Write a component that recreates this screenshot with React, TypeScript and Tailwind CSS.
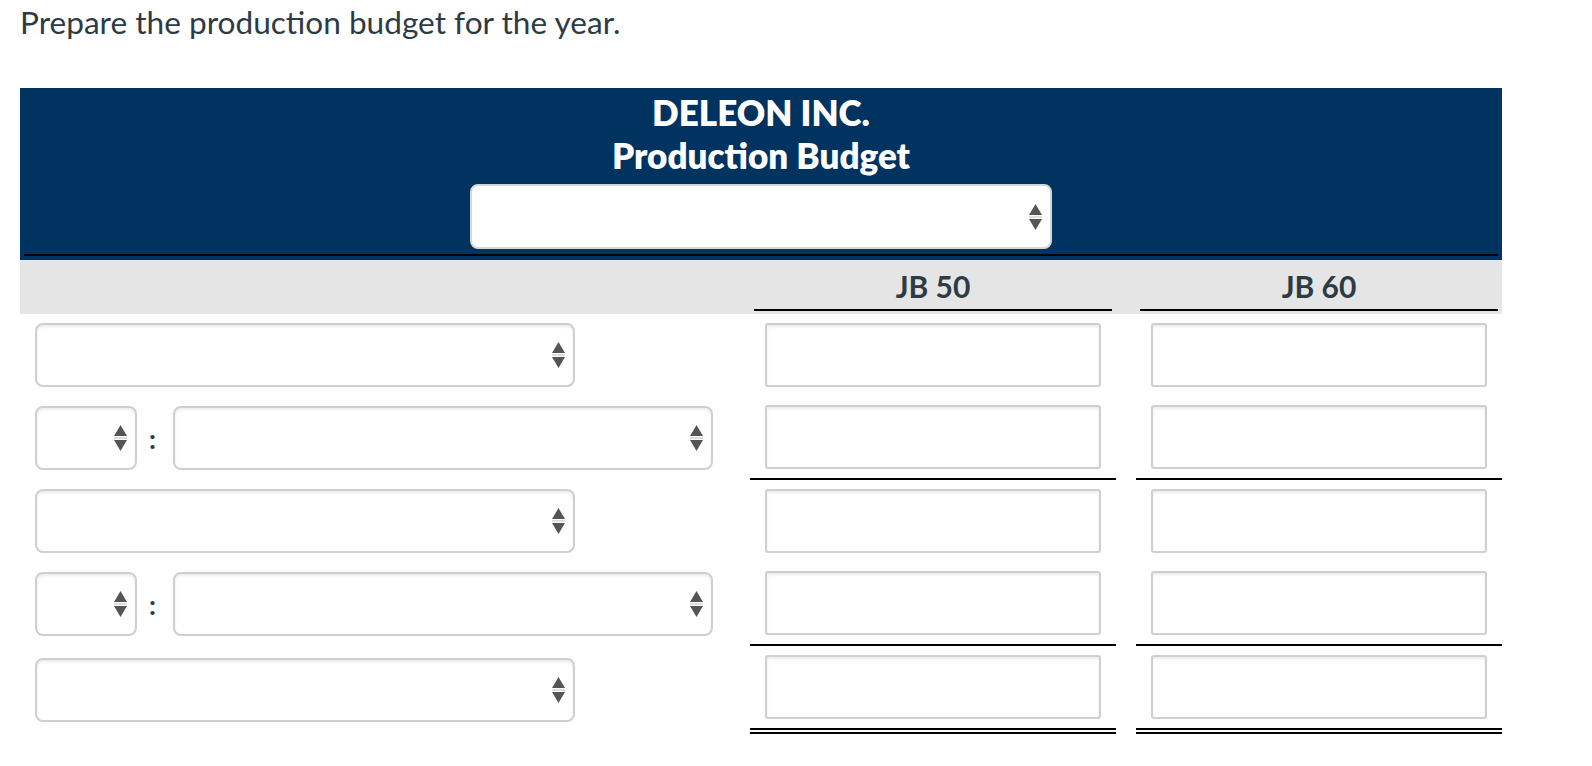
import React from 'react'

// Production budget worksheet: header band, column titles, five entry rows.

const text = 'text-[#2d3b45]'

function Arrows() {
  return (
    <svg width="13" height="26" viewBox="0 0 13 26" aria-hidden="true">
      <polygon points="0,11 6.5,0 13,11" fill="#555" />
      <line x1="0" y1="13" x2="13" y2="13" stroke="#bdbdbd" strokeWidth="1" />
      <polygon points="0,15 13,15 6.5,26" fill="#555" />
    </svg>
  )
}

function Select({ width }: { width: string }) {
  return (
    <div
      role="combobox"
      className={`${width} h-[64px] flex items-center justify-end pr-[8px] bg-white border-2 border-[#cfcfcf] rounded-[8px] shadow-[inset_0_2px_3px_rgba(0,0,0,0.08)]`}
    >
      <Arrows />
    </div>
  )
}

function Input() {
  return (
    <div className="h-[64px] bg-white border-2 border-[#cfcfcf] rounded-[3px] shadow-[inset_0_2px_3px_rgba(0,0,0,0.08)]" />
  )
}

type Rule = 'none' | 'single' | 'double'

const ruleClass: Record<Rule, string> = {
  none: '',
  single: 'border-b-2 border-black',
  double: 'border-b-[6px] border-double border-black',
}

function Row({ split, rule }: { split: boolean; rule: Rule }) {
  return (
    <div className="flex">
      <div className="w-[730px] pl-[15px] py-[9px] flex items-center">
        {split ? (
          <>
            <Select width="w-[102px]" />
            <span className={`w-[36px] pl-[12px] text-[27px] font-bold leading-none ${text}`}>:</span>
            <Select width="w-[540px]" />
          </>
        ) : (
          <Select width="w-[540px]" />
        )}
      </div>
      <div className={`w-[366px] px-[15px] py-[9px] ${ruleClass[rule]}`}>
        <Input />
      </div>
      <div className="w-[20px]" />
      <div className={`w-[366px] px-[15px] py-[9px] ${ruleClass[rule]}`}>
        <Input />
      </div>
    </div>
  )
}

export default function App() {
  const rows: { split: boolean; rule: Rule }[] = [
    { split: false, rule: 'none' },
    { split: true, rule: 'single' },
    { split: false, rule: 'none' },
    { split: true, rule: 'single' },
    { split: false, rule: 'double' },
  ]

  return (
    <div className="min-h-screen bg-white pt-[3px] px-[20px] font-['Lato','Noto_Sans',sans-serif]">
      <p className={`text-[31.6px] leading-[38px] ${text}`}>Prepare the production budget for the year.</p>

      <div className="mt-[47px] w-[1482px]">
        <div className="bg-[#00335f] pt-[3px] px-[4px] pb-[4px]">
          <div className="border-b-2 border-black pb-[5px] flex flex-col items-center text-white font-extrabold text-[35px] leading-[43px]">
            <div>DELEON INC.</div>
            <div>Production Budget</div>
            <div
              role="combobox"
              className="mt-[7px] w-[582px] h-[65px] flex items-center justify-end pr-[8px] bg-white border-2 border-[#d6d6d6] rounded-[8px]"
            >
              <Arrows />
            </div>
          </div>
        </div>

        <div className="flex h-[54px] bg-[#e5e5e5]">
          <div className="w-[730px]" />
          <div className="w-[366px] px-[4px] pt-[11px]">
            <div className={`border-b-2 border-black pb-[8px] text-center text-[30px] leading-[30px] font-bold ${text}`}>
              JB 50
            </div>
          </div>
          <div className="w-[20px]" />
          <div className="w-[366px] px-[4px] pt-[11px]">
            <div className={`border-b-2 border-black pb-[8px] text-center text-[30px] leading-[30px] font-bold ${text}`}>
              JB 60
            </div>
          </div>
        </div>

        {rows.map((r, i) => (
          <Row key={i} split={r.split} rule={r.rule} />
        ))}
      </div>
    </div>
  )
}
